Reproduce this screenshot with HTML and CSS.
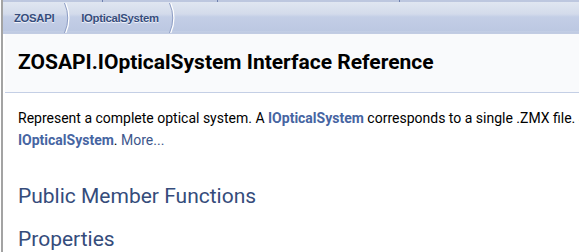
FILE: index.html
```html
<!DOCTYPE html>
<html>
<head>
<meta charset="utf-8">
<link rel="stylesheet" href="styles.css">
</head>
<body>
<div class="frame">
  <div class="tabs">
    <span class="tab t1"></span><span class="tab t2"></span><span class="tab t3"></span><span class="tab t4"></span>
  </div>
  <div class="navpath">
    <ul>
      <li>ZOSAPI</li>
      <li class="sep"><svg width="9" height="30" viewBox="0 0 9 30"><path d="M1.5 0 Q8 15 1.5 30" fill="none" stroke="#ffffff" stroke-width="1.6"/><path d="M0.5 0 Q7 15 0.5 30" fill="none" stroke="#8d9dc4" stroke-width="1"/></svg></li>
      <li>IOpticalSystem</li>
      <li class="sep"><svg width="9" height="30" viewBox="0 0 9 30"><path d="M1.5 0 Q8 15 1.5 30" fill="none" stroke="#ffffff" stroke-width="1.6"/><path d="M0.5 0 Q7 15 0.5 30" fill="none" stroke="#8d9dc4" stroke-width="1"/></svg></li>
    </ul>
  </div>
  <div class="header">
    <div class="title">ZOSAPI.IOpticalSystem Interface Reference</div>
  </div>
  <div class="contents">
    <p class="brief">Represent a complete optical system. A <a class="el">IOpticalSystem</a> corresponds to a single .ZMX file. Systems are opened through the application, and each open file is an<br><a class="el">IOpticalSystem</a>. <a class="more">More...</a></p>
    <h2 class="groupheader">Public Member Functions</h2>
    <h2 class="groupheader">Properties</h2>
  </div>
</div>
</body>
</html>
```
FILE: styles.css
```css
html, body {
  margin: 0;
  padding: 0;
  overflow: hidden;
  background: #ffffff;
}
.frame {
  width: 1200px;
  min-height: 252px;
  margin-left: 1px;
  border-left: 2px solid #a3a3a3;
  font-family: Roboto, "Noto Sans", sans-serif;
}
.tabs {
  height: 2px;
  background: #bdc7df;
  display: flex;
}
.tab { display: block; height: 2px; border-right: 1px solid #6e80ae; }
.t1 { width: 99px; }
.t2 { width: 114px; }
.t3 { width: 181px; }
.t4 { width: 0; border: none; }
.navpath {
  height: 31px;
  background: linear-gradient(to bottom, #e0e6f1 0px, #d3dbeb 12px, #c3cee6 15px, #bcc8e2 29px, #c9d3e8 30px, #b7c3dd 31px);
  border-bottom: 1px solid #c2cce3;
}
.navpath ul {
  list-style: none;
  margin: 0;
  padding: 0 0 0 11px;
  display: flex;
  align-items: center;
  height: 31px;
}
.navpath li {
  font-family: "Liberation Sans", Arial, sans-serif;
  font-weight: bold;
  font-size: 11.3px;
  color: #364d7c;
  letter-spacing: -0.3px;
  text-shadow: 0 1px 1px rgba(255,255,255,0.9);
}
.navpath li.sep {
  display: flex;
  height: 30px;
  margin: 0 8px 0 10px;
}
.header {
  background: #f9fafc;
  border-bottom: 1px solid #c4cfe5;
  margin-left: 2px;
  height: 58px;
}
.title {
  font-size: 21px;
  font-weight: bold;
  color: #000000;
  padding: 14px 0 0 13px;
  line-height: 28px;
}
.contents {
  padding-left: 15px;
}
.brief {
  margin: 14px 0 0 0;
  font-size: 14px;
  line-height: 22px;
  color: #000000;
  white-space: nowrap;
}
.el {
  color: #4665a2;
  font-weight: bold;
  text-decoration: none;
}
.more {
  color: #3d578c;
  text-decoration: none;
}
.groupheader {
  font-size: 21px;
  font-weight: normal;
  color: #354c7b;
  margin: 0;
  line-height: 28px;
}
.brief + .groupheader { margin-top: 31px; }
.groupheader + .groupheader { margin-top: 15px; }
```
